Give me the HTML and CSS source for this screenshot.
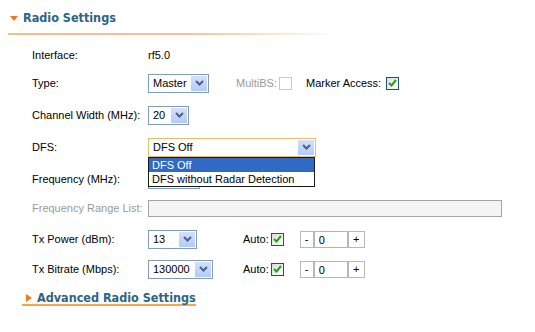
FILE: index.html
```html
<!DOCTYPE html>
<html lang="en">
<head>
    <meta charset="UTF-8">
    <title>Radio Settings</title>
    <link rel="stylesheet" href="styles.css">
</head>
<body>

<div class="panel">
    <div class="section-head">
        <span class="tri-down"></span>
        <h2>Radio Settings</h2>
    </div>
    <div class="rule"></div>

    <div class="form">
        <label>Interface:</label>
        <div class="field">rf5.0</div>

        <label>Type:</label>
        <div class="field">
            <span class="select w-master"><span class="val">Master</span><span class="arrow"><svg width="9" height="6" viewBox="0 0 9 6"><polyline points="1,1 4.5,4.5 8,1" /></svg></span></span>
            <span class="opt disabled multibs">MultiBS:</span>
            <span class="check off"></span>
            <span class="opt marker">Marker Access:</span>
            <span class="check on"><svg width="9" height="8" viewBox="0 0 9 8"><polyline points="1,4 3.5,6.5 8,1" /></svg></span>
        </div>

        <label>Channel Width (MHz):</label>
        <div class="field">
            <span class="select w-small"><span class="val">20</span><span class="arrow"><svg width="9" height="6" viewBox="0 0 9 6"><polyline points="1,1 4.5,4.5 8,1" /></svg></span></span>
        </div>

        <label>DFS:</label>
        <div class="field">
            <span class="select w-dfs focus"><span class="val">DFS Off</span><span class="arrow"><svg width="9" height="6" viewBox="0 0 9 6"><polyline points="1,1 4.5,4.5 8,1" /></svg></span>
                <ul class="dropdown">
                    <li class="selected">DFS Off</li>
                    <li>DFS without Radar Detection</li>
                </ul>
            </span>
        </div>

        <label>Frequency (MHz):</label>
        <div class="field">
            <span class="select w-freq"><span class="val"></span><span class="arrow"></span></span>
        </div>

        <label class="disabled">Frequency Range List:</label>
        <div class="field">
            <span class="text-input wide"></span>
        </div>

        <label>Tx Power (dBm):</label>
        <div class="field">
            <div class="pick">
                <span class="select w-power"><span class="val">13</span><span class="arrow"><svg width="9" height="6" viewBox="0 0 9 6"><polyline points="1,1 4.5,4.5 8,1" /></svg></span></span>
            </div>
            <span class="opt">Auto:</span>
            <span class="check on"><svg width="9" height="8" viewBox="0 0 9 8"><polyline points="1,4 3.5,6.5 8,1" /></svg></span>
            <div class="stepper">
                <span class="btn minus">-</span><span class="num">0</span><span class="btn plus">+</span>
            </div>
        </div>

        <label>Tx Bitrate (Mbps):</label>
        <div class="field">
            <div class="pick">
                <span class="select w-rate"><span class="val">130000</span><span class="arrow"><svg width="9" height="6" viewBox="0 0 9 6"><polyline points="1,1 4.5,4.5 8,1" /></svg></span></span>
            </div>
            <span class="opt">Auto:</span>
            <span class="check on"><svg width="9" height="8" viewBox="0 0 9 8"><polyline points="1,4 3.5,6.5 8,1" /></svg></span>
            <div class="stepper">
                <span class="btn minus">-</span><span class="num">0</span><span class="btn plus">+</span>
            </div>
        </div>
    </div>

    <a class="section-link" href="#"><span class="tri-right"></span>Advanced Radio Settings</a>
</div>

</body>
</html>
```

FILE: styles.css
```css
body { margin: 0; background: #fff; font-family: "Liberation Sans", Arial, sans-serif; font-size: 11px; color: #000; }
.panel { padding-top: 10px; }

.section-head { display: flex; align-items: center; padding-left: 10px; height: 16px; }
.tri-down { width: 0; height: 0; border-left: 4px solid transparent; border-right: 4px solid transparent; border-top: 5px solid #ee7a1e; margin-right: 5px; margin-top: 1px; }
.section-head h2, .section-link {
    margin: 0;
    font-family: "DejaVu Sans Condensed", "DejaVu Sans", sans-serif;
    font-stretch: condensed;
    font-weight: bold;
    font-size: 12.5px;
    line-height: 16px;
    color: #2c6482;
}
.rule { margin: 7px 0 0 8px; width: 330px; height: 2px; background: linear-gradient(to right, #f4c08c 0%, #f4c390 55%, rgba(255,255,255,0) 100%); }

.form {
    display: grid;
    grid-template-columns: 116px 1fr;
    grid-template-rows: 28px 28px 36px 28px 36px 22px 40px 20px;
    margin: 6px 0 0 32px;
}
.form label { display: flex; align-items: center; }
.field { display: flex; align-items: center; }
.disabled { color: #9a9a9a; }

.select {
    position: relative;
    display: flex;
    align-items: center;
    justify-content: space-between;
    height: 17px;
    border: 1px solid #7f9db9;
    background: #fff;
    padding-left: 4px;
    box-sizing: content-box;
}
.select .arrow {
    display: flex;
    align-items: center;
    justify-content: center;
    width: 16px;
    height: 15px;
    margin-right: 1px;
    background: linear-gradient(#d2e0fd, #b4cbf7);
    border: 0;
}
.select .arrow polyline { fill: none; stroke: #4d6185; stroke-width: 2; }
.w-master { width: 55px; }
.w-small { width: 35px; }
.w-dfs { width: 162px; }
.w-freq { width: 46px; }
.w-power { width: 43px; }
.w-rate { width: 59px; }
.select.focus { border-color: #e5bd6c; }

.dropdown {
    position: absolute;
    top: 18px;
    left: -1px;
    width: 165px;
    margin: 0;
    padding: 0;
    list-style: none;
    background: #fff;
    border: 1px solid #1a1a1a;
    z-index: 2;
}
.dropdown li { height: 14px; line-height: 14px; padding-left: 3px; }
.dropdown li.selected { background: #316ac5; color: #fff; }

.opt { margin-right: 2px; }
.multibs { margin-left: 27px; }
.marker { margin-left: 14px; margin-right: 5px; }

.check {
    display: flex;
    align-items: center;
    justify-content: center;
    width: 11px;
    height: 11px;
    border: 1px solid #1c5180;
    background: linear-gradient(135deg, #dcdcd7, #fff);
}
.check.off { border-color: #c8c8c8; background: #fff; }
.check polyline { fill: none; stroke: #21a121; stroke-width: 2; }

.text-input { display: block; height: 15px; border: 1px solid #a5a5a5; background: #f4f4f4; }
.text-input.wide { width: 352px; }

.pick { width: 95px; }
.stepper { display: flex; margin-left: 16px; height: 17px; }
.stepper .btn {
    display: flex;
    align-items: center;
    justify-content: center;
    border: 1px solid #b8b8b8;
    background: #fff;
    box-sizing: border-box;
}
.stepper .minus { width: 14px; }
.stepper .plus { width: 17px; }
.stepper .num { width: 34px; box-sizing: border-box; border: 1px solid #a9b8c9; padding: 1px 0 0 4px; line-height: 14px; }

.section-link {
    display: inline-flex;
    align-items: center;
    margin: 12px 0 0 22px;
    line-height: 13px;
    text-decoration: none;
    border-bottom: 2px solid #f7a453;
}
.tri-right { width: 0; height: 0; border-top: 4px solid transparent; border-bottom: 4px solid transparent; border-left: 6px solid #ee7a1e; margin: 0 5px 0 4px; }
```
